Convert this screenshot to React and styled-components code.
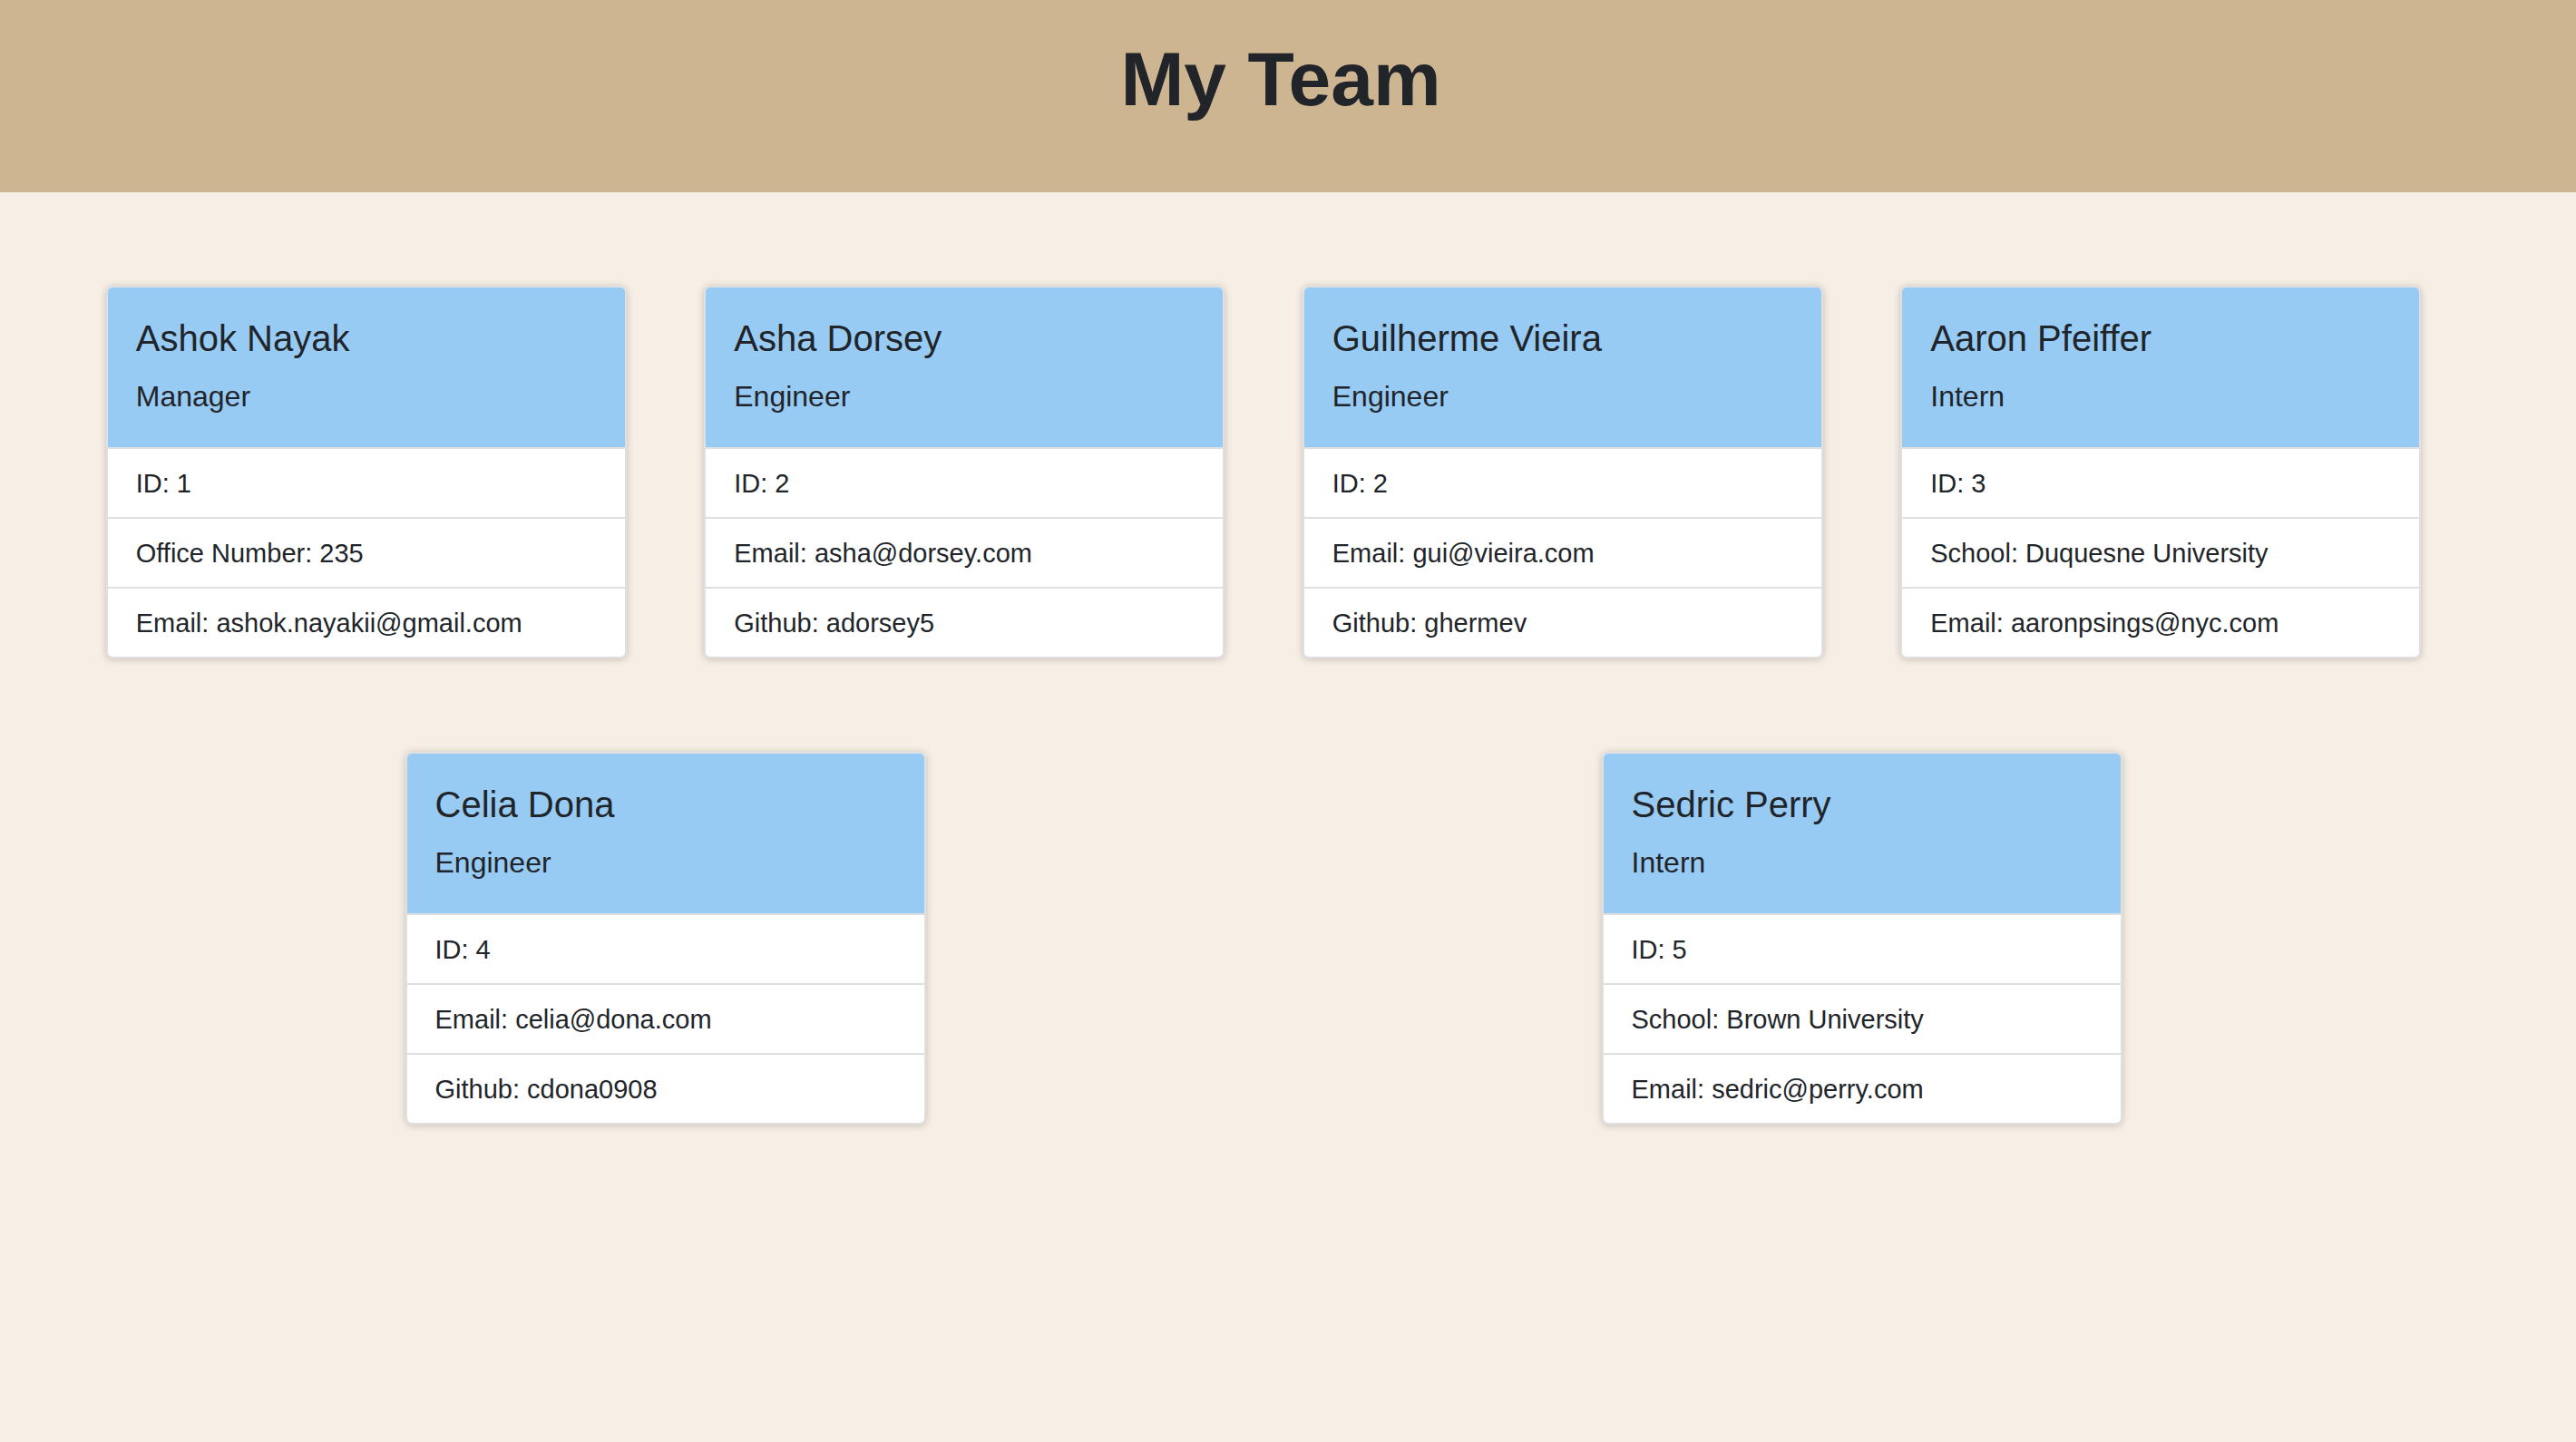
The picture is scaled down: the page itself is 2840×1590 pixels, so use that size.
import React from "react";
import styled, { createGlobalStyle } from "styled-components";

const GlobalStyle = createGlobalStyle`
  html, body {
    margin: 0;
    padding: 0;
  }
  body {
    background: #f7eee5;
    color: #212529;
    font-family: "Liberation Sans", Arial, Helvetica, sans-serif;
    min-height: 100vh;
  }
`;

const team = [
  {
    name: "Ashok Nayak",
    role: "Manager",
    details: ["ID: 1", "Office Number: 235", "Email: ashok.nayakii@gmail.com"],
  },
  {
    name: "Asha Dorsey",
    role: "Engineer",
    details: ["ID: 2", "Email: asha@dorsey.com", "Github: adorsey5"],
  },
  {
    name: "Guilherme Vieira",
    role: "Engineer",
    details: ["ID: 2", "Email: gui@vieira.com", "Github: ghermev"],
  },
  {
    name: "Aaron Pfeiffer",
    role: "Intern",
    details: ["ID: 3", "School: Duquesne University", "Email: aaronpsings@nyc.com"],
  },
  {
    name: "Celia Dona",
    role: "Engineer",
    details: ["ID: 4", "Email: celia@dona.com", "Github: cdona0908"],
  },
  {
    name: "Sedric Perry",
    role: "Intern",
    details: ["ID: 5", "School: Brown University", "Email: sedric@perry.com"],
  },
];

const Header = styled.header`
  height: 212px;
  box-sizing: border-box;
  padding: 45px 16px 0 0;
  background: #cdb591;
  text-align: center;
`;

const Title = styled.h1`
  margin: 0;
  font-size: 84px;
  line-height: 84px;
  font-weight: 700;
  color: #212529;
`;

const Team = styled.main`
  display: flex;
  flex-wrap: wrap;
  justify-content: space-around;
  row-gap: 103px;
  width: 2638px;
  margin: 103px 0 0 74px;
`;

const Card = styled.section`
  width: 574px;
  box-sizing: border-box;
  background: #fff;
  border: 2px solid rgba(0, 0, 0, 0.12);
  border-radius: 7px;
  box-shadow: 0 1px 9px rgba(0, 0, 0, 0.2);
  overflow: hidden;
`;

const CardHead = styled.div`
  background: #97cbf4;
  padding: 32px 31px 37px;
  border-bottom: 2px solid #dfdfdf;
`;

const Name = styled.h5`
  margin: 0 0 21px;
  font-size: 40px;
  line-height: 48px;
  font-weight: 400;
`;

const Role = styled.h6`
  margin: 0;
  font-size: 32px;
  line-height: 38px;
  font-weight: 400;
`;

const Details = styled.ul`
  list-style: none;
  margin: 0;
  padding: 0;
`;

const Detail = styled.li`
  padding: 16px 31px 15px;
  font-size: 29px;
  line-height: 44px;
  border-bottom: 2px solid #dfdfdf;

  &:last-child {
    border-bottom: none;
  }
`;

function EmployeeCard({ name, role, details }) {
  return (
    <Card>
      <CardHead>
        <Name>{name}</Name>
        <Role>{role}</Role>
      </CardHead>
      <Details>
        {details.map((d) => (
          <Detail key={d}>{d}</Detail>
        ))}
      </Details>
    </Card>
  );
}

export default function App() {
  return (
    <>
      <GlobalStyle />
      <Header>
        <Title>My Team</Title>
      </Header>
      <Team>
        {team.map((member) => (
          <EmployeeCard key={member.name} {...member} />
        ))}
      </Team>
    </>
  );
}
